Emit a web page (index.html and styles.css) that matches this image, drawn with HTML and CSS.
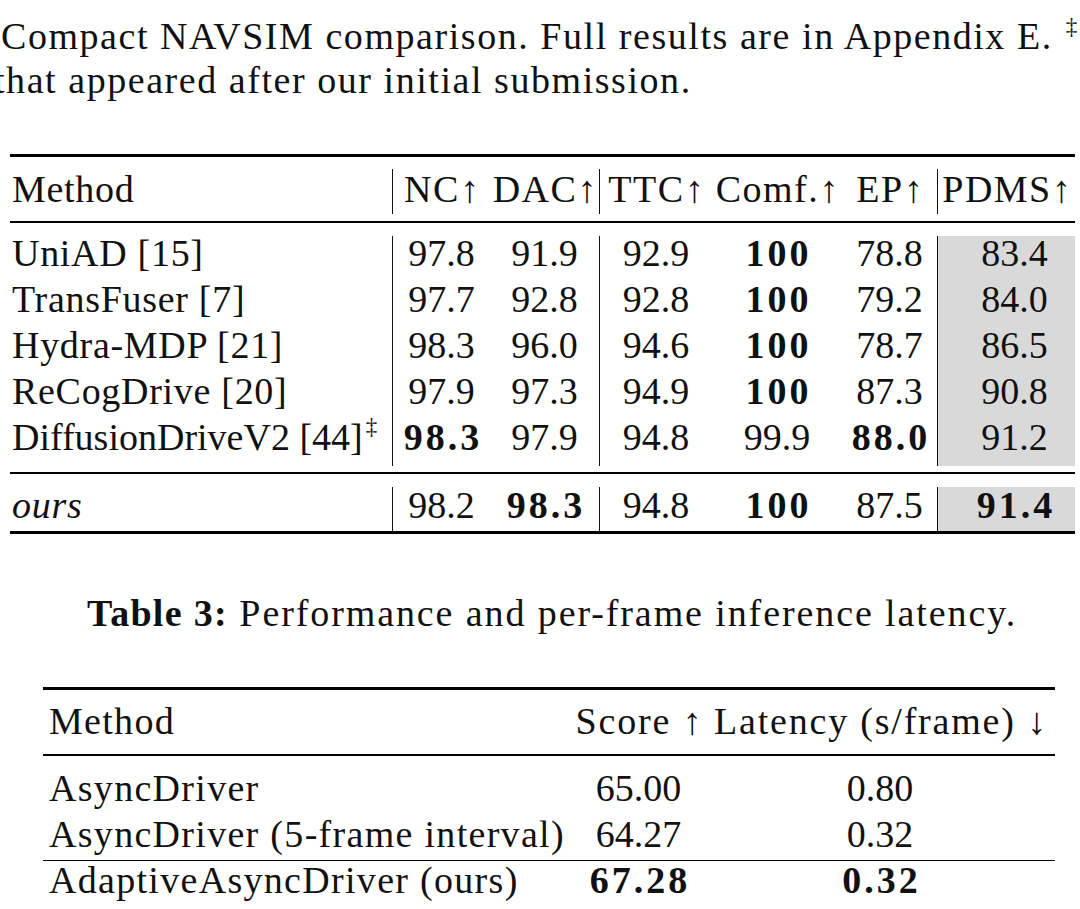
FILE: index.html
```html
<!DOCTYPE html>
<html>
<head>
<meta charset="utf-8">
<link rel="stylesheet" href="styles.css">
</head>
<body>
<div class="page">
  <p class="cap-top">
    <span class="l1">Compact NAVSIM comparison. Full results are in Appendix E. <sup class="dag">‡</sup></span>
    <span class="l2">that appeared after our initial submission.</span>
  </p>

  <div class="t1">
    <div class="rule thick"></div>
    <div class="row1 hdr">
      <div class="m">Method</div>
      <div class="c bar">NC↑</div>
      <div class="c">DAC↑</div>
      <div class="c bar">TTC↑</div>
      <div class="c">Comf.↑</div>
      <div class="c">EP↑</div>
      <div class="c bar">PDMS↑</div>
    </div>
    <div class="rule mid r-mid1"></div>
    <div class="body1">
      <div class="row1 brow">
        <div class="m">UniAD [15]</div>
        <div class="c bar">97.8</div><div class="c">91.9</div>
        <div class="c bar">92.9</div><div class="c b">100</div><div class="c">78.8</div>
        <div class="c bar pd">83.4</div>
      </div>
      <div class="row1 brow">
        <div class="m">TransFuser [7]</div>
        <div class="c bar">97.7</div><div class="c">92.8</div>
        <div class="c bar">92.8</div><div class="c b">100</div><div class="c">79.2</div>
        <div class="c bar pd">84.0</div>
      </div>
      <div class="row1 brow">
        <div class="m">Hydra-MDP [21]</div>
        <div class="c bar">98.3</div><div class="c">96.0</div>
        <div class="c bar">94.6</div><div class="c b">100</div><div class="c">78.7</div>
        <div class="c bar pd">86.5</div>
      </div>
      <div class="row1 brow">
        <div class="m">ReCogDrive [20]</div>
        <div class="c bar">97.9</div><div class="c">97.3</div>
        <div class="c bar">94.9</div><div class="c b">100</div><div class="c">87.3</div>
        <div class="c bar pd">90.8</div>
      </div>
      <div class="row1 brow">
        <div class="m tight">DiffusionDriveV2 [44]<sup class="dag2">‡</sup></div>
        <div class="c bar b">98.3</div><div class="c">97.9</div>
        <div class="c bar">94.8</div><div class="c">99.9</div><div class="c b">88.0</div>
        <div class="c bar pd">91.2</div>
      </div>
    </div>
    <div class="rule mid r-mid2"></div>
    <div class="row1 ours">
      <div class="m"><i>ours</i></div>
      <div class="c bar">98.2</div><div class="c b">98.3</div>
      <div class="c bar">94.8</div><div class="c b">100</div><div class="c">87.5</div>
      <div class="c bar pd b">91.4</div>
    </div>
    <div class="rule thick"></div>
  </div>

  <p class="cap3"><b>Table 3:</b> Performance and per-frame inference latency.</p>

  <div class="t2">
    <div class="rule thick"></div>
    <div class="row2 hdr2">
      <div class="m2">Method</div>
      <div class="c h2">Score ↑</div>
      <div class="c h2">Latency (s/frame) ↓</div>
    </div>
    <div class="rule mid r-mid3"></div>
    <div class="row2 r2a">
      <div class="m2">AsyncDriver</div>
      <div class="c">65.00</div>
      <div class="c">0.80</div>
    </div>
    <div class="row2 r2b">
      <div class="m2">AsyncDriver (5-frame interval)</div>
      <div class="c">64.27</div>
      <div class="c">0.32</div>
    </div>
    <div class="rule thin"></div>
    <div class="row2 r2c">
      <div class="m2">AdaptiveAsyncDriver (ours)</div>
      <div class="c b">67.28</div>
      <div class="c b">0.32</div>
    </div>
  </div>
</div>
</body>
</html>
```

FILE: styles.css
```css
html, body {
  margin: 0;
  padding: 0;
  background: #ffffff;
}
body {
  font-family: "Liberation Serif", "Times New Roman", serif;
  font-size: 38px;
  color: #111111;
  overflow: hidden;
  width: 1080px;
  height: 909px;
}
.page {
  display: flex;
  flex-direction: column;
}
.cap-top {
  margin: 14px 0 0 0;
  line-height: 44px;
  white-space: nowrap;
  letter-spacing: 1.55px;
}
.cap-top span {
  display: block;
}
.l1 {
  padding-left: 1px;
}
.l2 {
  margin-left: -6px;
}
.dag {
  font-size: 23px;
  line-height: 0;
  vertical-align: 15px;
  margin-left: 2px;
}
.dag2 {
  font-size: 23px;
  line-height: 0;
  vertical-align: 16px;
  margin-left: 3px;
}
.rule {
  background: #000;
}
.thick {
  height: 3px;
}
.mid {
  height: 2px;
}
.thin {
  height: 1.4px;
  margin-top: 8px;
}

/* Table 1 */
.t1 {
  margin: 52px 0 0 10px;
  width: 1065px;
  display: flex;
  flex-direction: column;
}
.row1 {
  display: grid;
  grid-template-columns: 382px 98px 109px 113px 130px 95px 138px;
  white-space: nowrap;
}
.c {
  text-align: center;
}
.b {
  font-weight: bold;
  letter-spacing: 3px;
  text-indent: 3px;
}
.m {
  padding-left: 2px;
  letter-spacing: 0.7px;
}
.m.tight {
  letter-spacing: 0;
}
.hdr .c {
  letter-spacing: 1.5px;
  text-indent: 1.5px;
}
.bar {
  border-left: 1.5px solid #111;
}
.pd {
  background: #d9d9d9;
}
.brow .pd {
  padding-left: 16px;
}
.hdr {
  margin-top: 12px;
}
.hdr > div {
  line-height: 41px;
  padding-bottom: 4px;
}
.r-mid1 {
  margin-top: 7px;
}
.body1 {
  margin-top: 13px;
  display: flex;
  flex-direction: column;
}
.brow > div {
  line-height: 35px;
  padding-bottom: 11px;
}
.r-mid2 {
  margin-top: 6px;
}
.ours {
  margin-top: 13px;
}
.ours > div {
  line-height: 37px;
  padding-bottom: 7px;
}
.ours .pd {
  padding-left: 16px;
}

/* Table 3 caption */
.cap3 {
  margin: 57px 0 0 0;
  line-height: 44px;
  text-align: center;
  padding-left: 24px;
  white-space: nowrap;
  letter-spacing: 1.9px;
}
.cap3 b {
  letter-spacing: 1.3px;
}

/* Table 2 */
.t2 {
  margin: 52px 0 0 43px;
  width: 1012px;
  display: flex;
  flex-direction: column;
}
.row2 {
  display: grid;
  grid-template-columns: 529px 133px 350px;
  white-space: nowrap;
}
.row2 > div {
  line-height: 36px;
}
.m2 {
  padding-left: 6px;
  letter-spacing: 1.3px;
}
.h2 {
  letter-spacing: 1.8px;
  text-indent: 1.8px;
}
.row2.hdr2 {
  margin-top: 9px;
}
.row2.hdr2 > div {
  line-height: 44px;
}
.r-mid3 {
  margin-top: 11px;
}
.r2a {
  margin-top: 14px;
}
.r2b {
  margin-top: 10px;
}
.r2c {
  margin-top: 0.6px;
}
```
